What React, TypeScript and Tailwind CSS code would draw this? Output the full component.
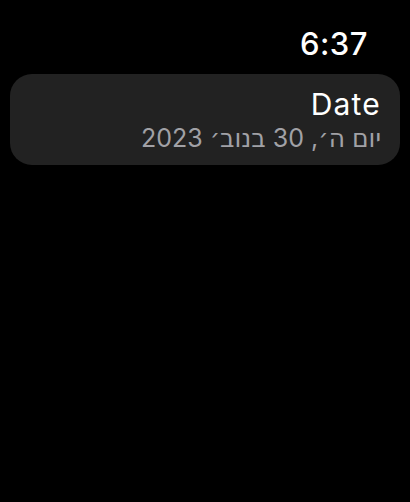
export default function App() {
  return (
    <div
      className="w-[410px] h-[502px] bg-black text-white overflow-hidden"
      style={{ fontFamily: 'Inter, "Noto Sans", "DejaVu Sans", sans-serif' }}
    >
      {/* Status bar */}
      <div className="flex justify-end pr-[42px] pt-[24px] h-[74px]">
        <span className="text-[31px] leading-[40px] font-medium tracking-[0.5px]">6:37</span>
      </div>

      {/* Date cell */}
      <div className="mx-[10px] h-[91px] rounded-[22px] bg-[#222222] flex flex-col items-end justify-center pr-[19px] pl-4">
        <div className="text-[30px] leading-[36px] tracking-[1.2px] text-white">Date</div>
        <div dir="rtl" className="text-[25px] leading-[32px] text-[#a1a1a6]">
          יום ה׳, 30 בנוב׳ 2023
        </div>
      </div>
    </div>
  );
}
